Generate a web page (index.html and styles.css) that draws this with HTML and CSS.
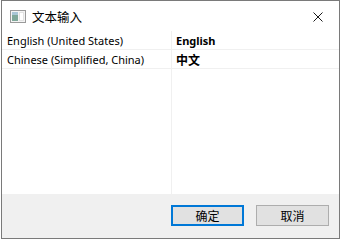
FILE: index.html
```html
<!DOCTYPE html>
<html lang="zh">
<head>
  <meta charset="UTF-8" />
  <title>文本输入</title>
  <link rel="stylesheet" href="styles.css">
</head>
<body>

<div class="window">
  <div class="titlebar">
    <svg class="app-icon" width="16" height="16" viewBox="0 0 16 16">
      <rect x="0.5" y="1.5" width="15" height="12" fill="#f4f4f4" stroke="#9a9a9a"/>
      <rect x="2" y="3" width="6" height="9" fill="#7fa89a"/>
      <rect x="2" y="3" width="6" height="3" fill="#a9c6d6"/>
      <rect x="9" y="3" width="5" height="9" fill="#e2e2e2"/>
      <rect x="10" y="4" width="3" height="7" fill="#ffffff"/>
    </svg>
    <span class="title">文本输入</span>
    <svg class="close" width="10" height="10" viewBox="0 0 10 10">
      <path d="M0.5 0.5 L9.5 9.5 M9.5 0.5 L0.5 9.5" stroke="#1a1a1a" stroke-width="1"/>
    </svg>
  </div>

  <div class="list">
    <div class="col col-name">
      <div class="row">English (United States)</div>
      <div class="row">Chinese (Simplified, China)</div>
    </div>
    <div class="col col-native">
      <div class="row">English</div>
      <div class="row"><span class="cjk">中文</span></div>
    </div>
  </div>

  <div class="footer">
    <button class="btn btn-default">确定</button>
    <button class="btn">取消</button>
  </div>
</div>

</body>
</html>
```

FILE: styles.css
```css
body {
  margin: 0;
  padding-left: 1px;
  background: #fff;
  font-family: "Noto Sans", "Noto Sans CJK SC", sans-serif;
  font-size: 11px;
  color: #000;
}
.window {
  width: 339px;
  height: 239px;
  box-sizing: border-box;
  border: 1px solid #7a7a7a;
  background: #fff;
  display: flex;
  flex-direction: column;
}
.titlebar {
  height: 30px;
  display: flex;
  align-items: center;
  padding: 1px 8px 0 8px;
  box-sizing: border-box;
  flex-shrink: 0;
}
.app-icon {
  margin-right: 6px;
}
.title {
  font-family: "Noto Sans CJK SC", sans-serif;
  font-size: 12.5px;
  flex: 1;
}
.close {
  margin-right: 8px;
}
.list {
  flex: 1;
  display: flex;
}
.col {
  display: flex;
  flex-direction: column;
}
.col-name {
  width: 169px;
  border-right: 1px solid #f0f0f0;
}
.col-native {
  flex: 1;
  font-weight: bold;
}
.row {
  height: 18px;
  line-height: 20px;
  border-bottom: 1px solid #f0f0f0;
  padding-left: 5px;
  white-space: nowrap;
  overflow: hidden;
}
.col-native .row {
  padding-left: 4px;
}
.cjk {
  font-family: "Noto Sans CJK SC", sans-serif;
  font-size: 12px;
}
.footer {
  height: 44px;
  flex-shrink: 0;
  background: #f0f0f0;
  display: flex;
  justify-content: flex-end;
  align-items: flex-start;
  gap: 12px;
  padding: 11px 10px 0 0;
  box-sizing: border-box;
}
.btn {
  width: 73px;
  height: 21px;
  box-sizing: border-box;
  background: #e1e1e1;
  border: 1px solid #adadad;
  font-family: "Noto Sans CJK SC", sans-serif;
  font-size: 12px;
  padding: 0;
  color: #000;
}
.btn-default {
  border: 2px solid #0078d7;
}
```
